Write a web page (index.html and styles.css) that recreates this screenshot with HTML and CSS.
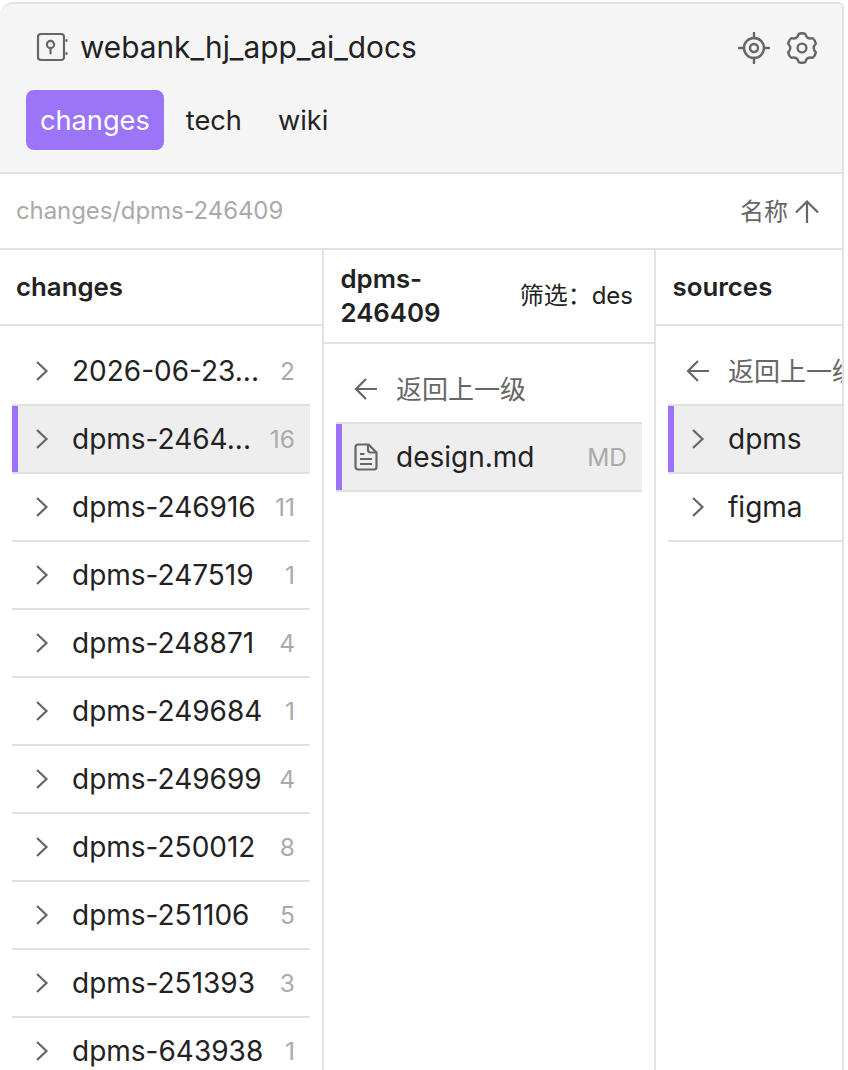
FILE: index.html
```html
<!DOCTYPE html>
<html lang="zh">
<head>
<meta charset="utf-8">
<title>webank_hj_app_ai_docs</title>
<link rel="stylesheet" href="styles.css">
</head>
<body>
<div class="frame">
  <header class="header">
    <div class="title-row">
      <div class="title-left">
        <svg class="icon-safe" viewBox="0 0 32 32" fill="none" stroke="currentColor" stroke-width="2.2" stroke-linecap="round"><rect x="2" y="2" width="26" height="26" rx="3"/><circle cx="14.500" cy="12.500" r="3.600"/><path d="M14.500 16.500v5M30.500 8v1M30.500 21v1"/></svg>
        <span class="title">webank_hj_app_ai_docs</span>
      </div>
      <div class="title-actions">
        <svg class="icon-action" viewBox="0 0 32 32" fill="none" stroke="currentColor" stroke-width="2.4" stroke-linecap="round"><circle cx="16" cy="16" r="10"/><circle cx="16" cy="16" r="4"/><path d="M16 1v5M16 26v5M1 16h5M26 16h5"/></svg>
        <svg class="icon-action" viewBox="0 0 32 32" fill="none" stroke="currentColor" stroke-width="2.4" stroke-linejoin="round"><path d="M12.740 1.870Q16 .5 19.260 1.870Q20.750 7.770 26.600 6.110Q29.420 8.250 29.870 11.760Q25.500 16 29.870 20.240Q29.420 23.750 26.600 25.890Q20.750 24.230 19.260 30.130Q16 31.500 12.740 30.130Q11.250 24.230 5.400 25.890Q2.580 23.750 2.130 20.240Q6.500 16 2.130 11.760Q2.580 8.250 5.400 6.110Q11.250 7.770 12.740 1.870Z"/><circle cx="16" cy="16" r="4.400"/></svg>
      </div>
    </div>
    <nav class="tabs">
      <span class="tab tab-active">changes</span>
      <span class="tab">tech</span>
      <span class="tab">wiki</span>
    </nav>
  </header>
  <div class="crumb-bar">
    <span class="crumb">changes/dpms-246409</span>
    <span class="sort"><span class="sort-label">名称</span>
      <svg class="icon-sort" viewBox="0 0 26 26" fill="none" stroke="currentColor" stroke-width="2.2"><path d="M13 3.500V25M2 14.500 13 3.500 24 14.500"/></svg>
    </span>
  </div>
  <div class="columns">
    <section class="col col-a">
      <div class="col-head col-head-a"><span class="col-title">changes</span></div>
      <div class="list">
        <div class="row"><div class="row-in"><svg class="icon" viewBox="0 0 24 24" fill="none" stroke="currentColor" stroke-width="2.2"><path d="M7 3l9.500 9L7 21"/></svg><span class="name">2026-06-23...</span><span class="count">2</span></div></div>
        <div class="row row-sel"><div class="row-in"><svg class="icon" viewBox="0 0 24 24" fill="none" stroke="currentColor" stroke-width="2.2"><path d="M7 3l9.500 9L7 21"/></svg><span class="name">dpms-2464...</span><span class="count">16</span></div></div>
        <div class="row"><div class="row-in"><svg class="icon" viewBox="0 0 24 24" fill="none" stroke="currentColor" stroke-width="2.2"><path d="M7 3l9.500 9L7 21"/></svg><span class="name">dpms-246916</span><span class="count">11</span></div></div>
        <div class="row"><div class="row-in"><svg class="icon" viewBox="0 0 24 24" fill="none" stroke="currentColor" stroke-width="2.2"><path d="M7 3l9.500 9L7 21"/></svg><span class="name">dpms-247519</span><span class="count">1</span></div></div>
        <div class="row"><div class="row-in"><svg class="icon" viewBox="0 0 24 24" fill="none" stroke="currentColor" stroke-width="2.2"><path d="M7 3l9.500 9L7 21"/></svg><span class="name">dpms-248871</span><span class="count">4</span></div></div>
        <div class="row"><div class="row-in"><svg class="icon" viewBox="0 0 24 24" fill="none" stroke="currentColor" stroke-width="2.2"><path d="M7 3l9.500 9L7 21"/></svg><span class="name">dpms-249684</span><span class="count">1</span></div></div>
        <div class="row"><div class="row-in"><svg class="icon" viewBox="0 0 24 24" fill="none" stroke="currentColor" stroke-width="2.2"><path d="M7 3l9.500 9L7 21"/></svg><span class="name">dpms-249699</span><span class="count">4</span></div></div>
        <div class="row"><div class="row-in"><svg class="icon" viewBox="0 0 24 24" fill="none" stroke="currentColor" stroke-width="2.2"><path d="M7 3l9.500 9L7 21"/></svg><span class="name">dpms-250012</span><span class="count">8</span></div></div>
        <div class="row"><div class="row-in"><svg class="icon" viewBox="0 0 24 24" fill="none" stroke="currentColor" stroke-width="2.2"><path d="M7 3l9.500 9L7 21"/></svg><span class="name">dpms-251106</span><span class="count">5</span></div></div>
        <div class="row"><div class="row-in"><svg class="icon" viewBox="0 0 24 24" fill="none" stroke="currentColor" stroke-width="2.2"><path d="M7 3l9.500 9L7 21"/></svg><span class="name">dpms-251393</span><span class="count">3</span></div></div>
        <div class="row"><div class="row-in"><svg class="icon" viewBox="0 0 24 24" fill="none" stroke="currentColor" stroke-width="2.2"><path d="M7 3l9.500 9L7 21"/></svg><span class="name">dpms-643938</span><span class="count">1</span></div></div>
      </div>
    </section>
    <section class="col col-b">
      <div class="col-head col-head-tall"><span class="col-title col-title-wrap">dpms-246409</span><span class="filter">筛选：des</span></div>
      <div class="list">
        <div class="row row-back"><div class="row-in"><svg class="icon" viewBox="0 0 24 24" fill="none" stroke="currentColor" stroke-width="2.2"><path d="M23 12H2M12 2 2 12l10 10"/></svg><span class="name">返回上一级</span></div></div>
        <div class="row row-sel"><div class="row-in"><svg class="icon-doc" viewBox="0 0 24 28" fill="none" stroke="currentColor" stroke-width="2.2" stroke-linejoin="round"><path d="M1.500 4A2.500 2.500 0 0 1 4 1.500h10.500l8 8V24a2.500 2.500 0 0 1-2.500 2.500H4A2.500 2.500 0 0 1 1.500 24Z"/><path d="M14 1.500V7a2.500 2.500 0 0 0 2.500 2.500h6M6 11h4.500M6 16h12M6 21h12"/></svg><span class="name">design.md</span><span class="count">MD</span></div></div>
      </div>
    </section>
    <section class="col col-c">
      <div class="col-head"><span class="col-title">sources</span></div>
      <div class="list">
        <div class="row row-back"><div class="row-in"><svg class="icon" viewBox="0 0 24 24" fill="none" stroke="currentColor" stroke-width="2.2"><path d="M23 12H2M12 2 2 12l10 10"/></svg><span class="name">返回上一级</span></div></div>
        <div class="row row-sel"><div class="row-in"><svg class="icon" viewBox="0 0 24 24" fill="none" stroke="currentColor" stroke-width="2.2"><path d="M7 3l9.500 9L7 21"/></svg><span class="name">dpms</span></div></div>
        <div class="row"><div class="row-in"><svg class="icon" viewBox="0 0 24 24" fill="none" stroke="currentColor" stroke-width="2.2"><path d="M7 3l9.500 9L7 21"/></svg><span class="name">figma</span></div></div>
      </div>
    </section>
  </div>
</div>
</body>
</html>
```
FILE: styles.css
```css
* { box-sizing: border-box; }
html, body { margin: 0; height: 100%; background: #fff; overflow: hidden; }
body {
  font-family: Inter, "Noto Sans CJK SC", sans-serif;
  color: #222;
  padding-top: 2px;
}
.frame {
  width: 844px;
  height: 1068px;
  border-top: 2px solid #e2e2e2;
  border-right: 2px solid #e2e2e2;
  border-radius: 14px 6px 0 0;
  overflow: hidden;
  display: flex;
  flex-direction: column;
}
.header {
  background: #f5f5f5;
  height: 170px;
  border-bottom: 2px solid #e2e2e2;
  padding: 24px 24px 0 26px;
  flex: none;
}
.title-row {
  display: flex;
  justify-content: space-between;
  align-items: center;
  height: 40px;
}
.title-left { display: flex; align-items: center; gap: 12px; padding-left: 10px; }
.icon-safe { width: 32px; height: 32px; color: #666; }
.title { font-size: 29.8px; line-height: 38px; padding-bottom: 2px; }
.title-actions { display: flex; align-items: center; gap: 16px; color: #666; }
.icon-action { width: 32px; height: 32px; }
.tabs { display: flex; gap: 8px; margin-top: 22px; }
.tab { font-size: 27.2px; line-height: 62px; height: 60px; padding: 0 14px; border-radius: 8px; }
.tab-active { background: #9b74f8; color: #fff; }
.crumb-bar {
  height: 76px;
  flex: none;
  border-bottom: 2px solid #e2e2e2;
  display: flex;
  justify-content: space-between;
  align-items: center;
  padding: 0 22px 0 16px;
}
.crumb { font-size: 24px; letter-spacing: -0.1px; color: #aaa; padding-bottom: 2px; }
.sort { font-size: 24px; color: #666; display: flex; align-items: center; gap: 6px; }
.sort-label { padding-bottom: 4px; }
.icon-sort { width: 26px; height: 26px; }
.columns { display: flex; flex: 1; min-height: 0; overflow: hidden; }
.col { flex: none; border-right: 2px solid #e2e2e2; }
.col-a { width: 324px; }
.col-b { width: 332px; }
.col-c { width: 332px; border-right: none; }
.col-head {
  height: 76px;
  border-bottom: 2px solid #e2e2e2;
  display: flex;
  align-items: center;
  justify-content: space-between;
  padding: 0 21px 0 16.5px;
}
.col-head-a { padding-left: 16px; }
.col-head-tall { height: 94px; }
.col-title { font-size: 25.8px; font-weight: 600; line-height: 34px; }
.col-title-wrap { width: 130px; }
.filter { font-size: 24px; padding-bottom: 6px; }
.list { padding: 12px 12px 0; }
.row { height: 68px; border-bottom: 2px solid #e0e0e0; }
.row-in {
  height: 66px;
  display: flex;
  align-items: center;
  gap: 18px;
  padding: 0 15px 0 12px;
  border-left: 6px solid transparent;
}
.row-sel { background: #eee; }
.row-sel .row-in { border-left-color: #9b74f8; }
.icon { width: 24px; height: 24px; flex: none; color: #666; }
.icon-doc { width: 24px; height: 28px; flex: none; color: #666; }
.name {
  flex: 1;
  min-width: 0;
  font-size: 28px;
  white-space: nowrap;
  overflow: hidden;
}
.count { flex: none; font-size: 24.5px; color: #aaa; }
.row-back .name { font-size: 26px; color: #666; padding-bottom: 4px; }
```
